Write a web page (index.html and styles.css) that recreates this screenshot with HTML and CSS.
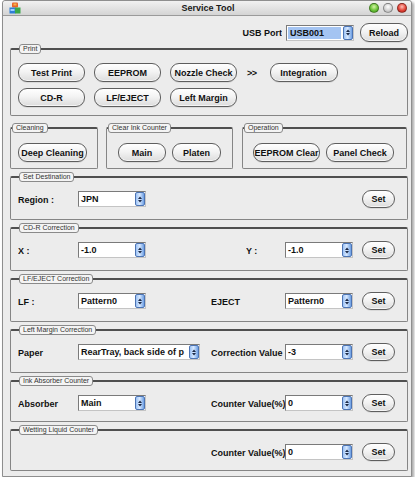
FILE: index.html
```html
<!DOCTYPE html>
<html>
<head>
<meta charset="utf-8">
<link rel="stylesheet" href="styles.css">
</head>
<body>
<div class="window">
  <div class="titlebar">
    <svg class="app-icon" width="12" height="12" viewBox="0 0 12 12">
      <rect x="3" y="0.5" width="6" height="5" rx="1" fill="#e8652a"/>
      <rect x="4.5" y="1.5" width="3" height="2" fill="#f6b24b"/>
      <rect x="0.5" y="5.5" width="6" height="6" fill="#2f7fd6"/>
      <rect x="6" y="5.5" width="5.5" height="6" fill="#3aa84a"/>
      <rect x="1.5" y="7" width="4" height="2" fill="#9cd0ff"/>
    </svg>
    <span class="title">Service Tool</span>
    <div class="lights">
      <span class="light green"></span>
      <span class="light gray"></span>
      <span class="light red"></span>
    </div>
  </div>

  <div class="content">
    <div class="toprow">
      <span class="lbl">USB Port</span>
      <div class="select w68 hl"><span class="val">USB001</span><span class="arrow"><svg width="4" height="7" viewBox="0 0 4 7"><path d="M0 3 L2 0.5 L4 3Z M0 4 L2 6.5 L4 4Z" fill="#1b2a48"/></svg></span></div>
      <button class="btn reload">Reload</button>
    </div>

    <fieldset class="group print">
      <legend>Print</legend>
      <div class="btnrow">
        <button class="btn w67">Test Print</button>
        <button class="btn w67">EEPROM</button>
        <button class="btn w67">Nozzle Check</button>
        <span class="chev">&gt;&gt;</span>
        <button class="btn w68">Integration</button>
      </div>
      <div class="btnrow">
        <button class="btn w67">CD-R</button>
        <button class="btn w67">LF/EJECT</button>
        <button class="btn w67">Left Margin</button>
      </div>
    </fieldset>

    <div class="trio">
      <fieldset class="group small cleaning">
        <legend>Cleaning</legend>
        <div class="btnrow pad7">
          <button class="btn w69">Deep Cleaning</button>
        </div>
      </fieldset>
      <fieldset class="group small inkctr">
        <legend>Clear Ink Counter</legend>
        <div class="btnrow pad11">
          <button class="btn w48">Main</button>
          <button class="btn w49">Platen</button>
        </div>
      </fieldset>
      <fieldset class="group small operation">
        <legend>Operation</legend>
        <div class="btnrow pad10">
          <button class="btn w67">EEPROM Clear</button>
          <button class="btn w68">Panel Check</button>
        </div>
      </fieldset>
    </div>

    <fieldset class="group row">
      <legend>Set Destination</legend>
      <div class="line">
        <span class="lbl l1">Region :</span>
        <div class="select w68"><span class="val">JPN</span><span class="arrow"><svg width="4" height="7" viewBox="0 0 4 7"><path d="M0 3 L2 0.5 L4 3Z M0 4 L2 6.5 L4 4Z" fill="#1b2a48"/></svg></span></div>
        <button class="btn set push">Set</button>
      </div>
    </fieldset>

    <fieldset class="group row">
      <legend>CD-R Correction</legend>
      <div class="line">
        <span class="lbl l1">X :</span>
        <div class="select w68"><span class="val">-1.0</span><span class="arrow"><svg width="4" height="7" viewBox="0 0 4 7"><path d="M0 3 L2 0.5 L4 3Z M0 4 L2 6.5 L4 4Z" fill="#1b2a48"/></svg></span></div>
        <span class="lbl l2 short">Y :</span>
        <div class="select w68"><span class="val">-1.0</span><span class="arrow"><svg width="4" height="7" viewBox="0 0 4 7"><path d="M0 3 L2 0.5 L4 3Z M0 4 L2 6.5 L4 4Z" fill="#1b2a48"/></svg></span></div>
        <button class="btn set">Set</button>
      </div>
    </fieldset>

    <fieldset class="group row">
      <legend>LF/EJECT Correction</legend>
      <div class="line">
        <span class="lbl l1">LF :</span>
        <div class="select w68"><span class="val">Pattern0</span><span class="arrow"><svg width="4" height="7" viewBox="0 0 4 7"><path d="M0 3 L2 0.5 L4 3Z M0 4 L2 6.5 L4 4Z" fill="#1b2a48"/></svg></span></div>
        <span class="lbl l2">EJECT</span>
        <div class="select w68"><span class="val">Pattern0</span><span class="arrow"><svg width="4" height="7" viewBox="0 0 4 7"><path d="M0 3 L2 0.5 L4 3Z M0 4 L2 6.5 L4 4Z" fill="#1b2a48"/></svg></span></div>
        <button class="btn set">Set</button>
      </div>
    </fieldset>

    <fieldset class="group row">
      <legend>Left Margin Correction</legend>
      <div class="line">
        <span class="lbl l1">Paper</span>
        <div class="select w122"><span class="val">RearTray, back side of p</span><span class="arrow"><svg width="4" height="7" viewBox="0 0 4 7"><path d="M0 3 L2 0.5 L4 3Z M0 4 L2 6.5 L4 4Z" fill="#1b2a48"/></svg></span></div>
        <span class="lbl l2">Correction Value</span>
        <div class="select w68"><span class="val">-3</span><span class="arrow"><svg width="4" height="7" viewBox="0 0 4 7"><path d="M0 3 L2 0.5 L4 3Z M0 4 L2 6.5 L4 4Z" fill="#1b2a48"/></svg></span></div>
        <button class="btn set">Set</button>
      </div>
    </fieldset>

    <fieldset class="group row short-row">
      <legend>Ink Absorber Counter</legend>
      <div class="line">
        <span class="lbl l1">Absorber</span>
        <div class="select w68"><span class="val">Main</span><span class="arrow"><svg width="4" height="7" viewBox="0 0 4 7"><path d="M0 3 L2 0.5 L4 3Z M0 4 L2 6.5 L4 4Z" fill="#1b2a48"/></svg></span></div>
        <span class="lbl l2">Counter Value(%)</span>
        <div class="select w68"><span class="val">0</span><span class="arrow"><svg width="4" height="7" viewBox="0 0 4 7"><path d="M0 3 L2 0.5 L4 3Z M0 4 L2 6.5 L4 4Z" fill="#1b2a48"/></svg></span></div>
        <button class="btn set">Set</button>
      </div>
    </fieldset>

    <fieldset class="group row short-row">
      <legend>Wetting Liquid Counter</legend>
      <div class="line">
        <span class="lbl l2">Counter Value(%)</span>
        <div class="select w68"><span class="val">0</span><span class="arrow"><svg width="4" height="7" viewBox="0 0 4 7"><path d="M0 3 L2 0.5 L4 3Z M0 4 L2 6.5 L4 4Z" fill="#1b2a48"/></svg></span></div>
        <button class="btn set">Set</button>
      </div>
    </fieldset>
  </div>
</div>
</body>
</html>
```

FILE: styles.css
```css
* { box-sizing: border-box; }

html, body {
  margin: 0;
  padding: 0;
  background: #ffffff;
  font-family: "Liberation Sans", Arial, sans-serif;
  color: #111;
}

.window {
  margin-left: 2px;
  width: 410px;
  height: 477px;
  background: #ececec;
  border: 1px solid #8e8e8e;
  border-radius: 3px 3px 0 0;
  box-shadow: 2px 2px 3px rgba(0, 0, 0, 0.35);
  display: flex;
  flex-direction: column;
}

.titlebar {
  height: 15px;
  flex: none;
  display: flex;
  align-items: center;
  padding: 0 4px 0 6px;
  background: linear-gradient(#f1f1f1, #d4d4d4);
  border-bottom: 1px solid #9a9a9a;
  border-radius: 3px 3px 0 0;
}

.app-icon { flex: none; }

.title {
  flex: 1;
  text-align: center;
  font-weight: bold;
  font-size: 9px;
  color: #1a1a1a;
  padding-left: 26px;
}

.lights {
  display: flex;
  gap: 4px;
  flex: none;
}

.light {
  width: 10px;
  height: 10px;
  border-radius: 50%;
  display: block;
  border: 1px solid rgba(0, 0, 0, 0.35);
}
.light.green { background: radial-gradient(circle at 50% 35%, #d6f5a6 0, #6cc43a 55%, #3b8c1a 100%); }
.light.gray  { background: radial-gradient(circle at 50% 35%, #ffffff 0, #d4d4d4 55%, #a3a3a3 100%); }
.light.red   { background: radial-gradient(circle at 50% 35%, #ffc0b8 0, #e2463a 55%, #a8190f 100%); }

.content {
  flex: 1;
  padding: 0 3px 0 7px;
  display: flex;
  flex-direction: column;
}

.toprow {
  margin-top: 7px;
  height: 19px;
  display: flex;
  align-items: center;
  justify-content: flex-end;
  gap: 5px;
}

.lbl {
  font-weight: bold;
  font-size: 9px;
  white-space: nowrap;
  overflow: hidden;
}

.toprow .lbl { margin-right: -1px; }

.btn {
  font-family: "Liberation Sans", Arial, sans-serif;
  font-weight: bold;
  font-size: 9px;
  color: #111;
  height: 19px;
  padding: 0;
  border: 1px solid #5e5e5e;
  border-radius: 9px;
  background: linear-gradient(#ffffff 0%, #f3f3f3 45%, #dcdcdc 100%);
  box-shadow: inset 0 -1px 0 rgba(255, 255, 255, 0.7), 0 1px 0 rgba(0, 0, 0, 0.08);
  white-space: nowrap;
  overflow: hidden;
  flex: none;
}

.reload { width: 48px; margin-left: 1px; }
.w48 { width: 48px; }
.w49 { width: 49px; }
.w67 { width: 67px; }
.w68 { width: 68px; }
.w69 { width: 69px; }

.select {
  height: 16px;
  display: flex;
  align-items: stretch;
  background: #fff;
  border: 1px solid;
  border-color: #7a7a7a #c4c4c4 #c4c4c4 #7a7a7a;
  flex: none;
}
.select.w68 { width: 68px; }
.select.w122 { width: 122px; }

.select .val {
  flex: 1;
  font-weight: bold;
  font-size: 9px;
  line-height: 14px;
  padding-left: 2px;
  white-space: nowrap;
  overflow: hidden;
}

.select.hl .val {
  background: #a4c4f2;
  margin: 1px 2px 1px 1px;
  line-height: 12px;
}

.select .arrow {
  width: 10px;
  flex: none;
  display: flex;
  align-items: center;
  justify-content: center;
  background: linear-gradient(90deg, #9cc2f5, #d8e9ff 45%, #6d9fe4);
  border: 1px solid #4c74b4;
  border-radius: 2px;
}

/* group boxes */
.group {
  margin: 0;
  padding: 0;
  min-width: 0;
  border: 1px solid #858585;
  border-top: 2px solid #4f4f4f;
  border-radius: 2px;
}

.group legend {
  margin-left: 1px;
  padding: 0 3px;
  height: 10px;
  font-size: 7px;
  line-height: 8px;
  color: #333;
  background: #f4f4f4;
  border: 1px solid #8a8a8a;
  border-radius: 3px;
  font-family: "Liberation Sans", Arial, sans-serif;
}

.print {
  margin-top: 2px;
  height: 72px;
  padding: 9px 0 0 7px;
}

.btnrow {
  display: flex;
  align-items: center;
  gap: 9px;
}
.print .btnrow + .btnrow { margin-top: 6px; }

.chev {
  font-weight: bold;
  font-size: 9px;
  margin: 0 4px 0 1px;
  letter-spacing: -0.5px;
}

.trio {
  margin-top: 7px;
  display: flex;
}

.group.small {
  height: 46px;
  padding-top: 10px;
}
.cleaning { width: 88px; }
.inkctr { width: 127px; margin-left: 8px; }
.operation { width: 165px; margin-left: 9px; }

.pad7 { padding-left: 7px; }
.pad11 { padding-left: 11px; gap: 6px; }
.pad10 { padding-left: 10px; gap: 6px; }

.group.row {
  margin-top: 3px;
  height: 48px;
  padding: 8px 12px 0 7px;
}
.group.row.short-row { height: 46px; }

.line {
  display: flex;
  align-items: center;
  height: 18px;
}

.l1 { width: 60px; padding-top: 2px; }
.l2 { width: 74px; margin-left: auto; padding-top: 2px; }
.l2.short { width: 39px; }

.set {
  width: 33px;
  height: 18px;
  margin-left: 9px;
}
.set.push { margin-left: auto; }
```
